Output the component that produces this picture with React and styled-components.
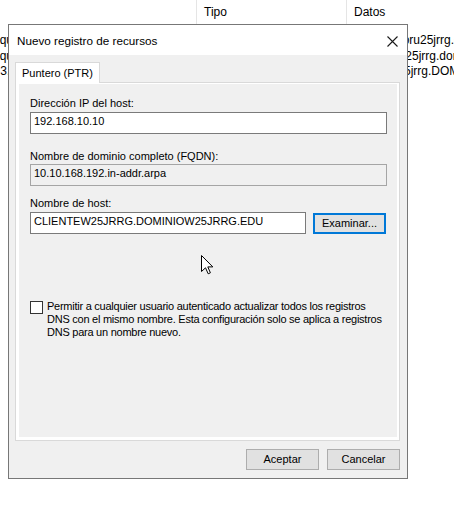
import React from "react";
import styled, { createGlobalStyle } from "styled-components";

const GlobalStyle = createGlobalStyle`
  html, body {
    margin: 0;
    padding: 0;
    background: #ffffff;
    overflow: hidden;
  }
  body {
    font-family: "Liberation Sans", Arial, sans-serif;
    color: #000000;
  }
`;

const records = [
  { name: "(igual que la carpeta principal)", type: "Host (A)", data: "ns-servidoru25jrrg.dominiou25jrrg.edu." },
  { name: "(igual que la carpeta principal)", type: "Servidor de nombres (NS)", data: "servidorw25jrrg.dominiow25jrrg.edu." },
  { name: "10.10.3.1", type: "Puntero (PTR)", data: "clientew25jrrg.DOMINIOW25JRRG.EDU." },
];

const App = () => {
  return (
    <Screen>
      <GlobalStyle />
      <ListView>
        <HeaderRow>
          <HeaderCell />
          <HeaderCell $divider>Tipo</HeaderCell>
          <HeaderCell $divider>Datos</HeaderCell>
        </HeaderRow>
        <RecordList>
          {records.map((r, i) => (
            <RecordRow key={i}>
              <NameCell>
                <span>{r.name}</span>
              </NameCell>
              <Cell>{r.type}</Cell>
              <Cell>{r.data}</Cell>
            </RecordRow>
          ))}
        </RecordList>
      </ListView>

      <Dialog>
        <TitleBar>
          <Title>Nuevo registro de recursos</Title>
          <CloseButton>
            <svg width="11" height="11" viewBox="0 0 11 11">
              <path d="M0.5 0.5 L10.5 10.5 M10.5 0.5 L0.5 10.5" stroke="#1a1a1a" strokeWidth="1.1" fill="none" />
            </svg>
          </CloseButton>
        </TitleBar>

        <Body>
          <TabStrip>
            <Tab>Puntero (PTR)</Tab>
          </TabStrip>
          <TabPanel>
            <PanelContent>
              <Label>Dirección IP del host:</Label>
              <TextBox $top={2} $width={357}>192.168.10.10</TextBox>

              <Label $top={16}>Nombre de dominio completo (FQDN):</Label>
              <TextBox $top={1} $width={357} $readOnly>10.10.168.192.in-addr.arpa</TextBox>

              <Label $top={11}>Nombre de host:</Label>
              <HostRow>
                <TextBox $width={276}>CLIENTEW25JRRG.DOMINIOW25JRRG.EDU</TextBox>
                <Button $focused $width={73}>Examinar...</Button>
              </HostRow>

              <CheckRow>
                <CheckBox />
                <CheckText>
                  Permitir a cualquier usuario autenticado actualizar todos los registros
                  <br />
                  DNS con el mismo nombre. Esta configuración solo se aplica a registros
                  <br />
                  DNS para un nombre nuevo.
                </CheckText>
              </CheckRow>
            </PanelContent>
          </TabPanel>

          <ButtonBar>
            <Button $width={73}>Aceptar</Button>
            <Button $width={73}>Cancelar</Button>
          </ButtonBar>
        </Body>
      </Dialog>

      <Pointer width="13" height="20" viewBox="0 0 13 20">
        <path
          d="M0.5 0.5 L0.5 16.5 L4.5 12.8 L7.2 18.8 L9.4 17.8 L6.8 11.9 L11.8 11.9 Z"
          fill="#ffffff"
          stroke="#000000"
          strokeWidth="1"
          strokeLinejoin="miter"
        />
      </Pointer>
    </Screen>
  );
};

export default App;

const Screen = styled.div`
  position: relative;
  width: 454px;
  height: 531px;
  overflow: hidden;
  background: #ffffff;
`;

/* list view behind the dialog */
const ListView = styled.div`
  display: flex;
  flex-direction: column;
  font-size: 12px;
`;

const HeaderRow = styled.div`
  display: grid;
  grid-template-columns: 196px 150px 1fr;
  height: 24px;
  line-height: 24px;
`;

const HeaderCell = styled.div`
  padding-left: 7px;
  white-space: nowrap;
  border-left: ${(p) => (p.$divider ? "1px solid #e5e5e5" : "none")};
`;

const RecordList = styled.div`
  display: flex;
  flex-direction: column;
  padding-top: 9px;
`;

const RecordRow = styled.div`
  display: grid;
  grid-template-columns: 196px 150px 1fr;
  line-height: 15.5px;
`;

const Cell = styled.div`
  padding-left: 8px;
  white-space: nowrap;
  overflow: hidden;
`;

const NameCell = styled.div`
  white-space: nowrap;
  overflow: hidden;
  span {
    margin-left: -33px;
  }
`;

/* dialog window */
const Dialog = styled.div`
  position: absolute;
  left: 8px;
  top: 24px;
  width: 400px;
  height: 455px;
  box-sizing: border-box;
  border: 1px solid #777777;
  background: #f0f0f0;
  display: flex;
  flex-direction: column;
  font-size: 11px;
`;

const TitleBar = styled.div`
  height: 30px;
  flex-shrink: 0;
  background: #ffffff;
  display: flex;
  align-items: center;
  justify-content: space-between;
  padding-left: 8px;
`;

const Title = styled.div`
  font-size: 11.7px;
  line-height: 14px;
  padding-top: 1px;
`;

const CloseButton = styled.div`
  width: 29px;
  height: 30px;
  display: flex;
  align-items: center;
  justify-content: center;
  padding-top: 2px;
  box-sizing: border-box;
`;

const Body = styled.div`
  flex: 1;
  display: flex;
  flex-direction: column;
  padding: 7px 7px 8px 6px;
`;

const TabStrip = styled.div`
  display: flex;
`;

const Tab = styled.div`
  position: relative;
  z-index: 1;
  height: 20px;
  line-height: 20px;
  padding: 0 6px;
  margin-bottom: -1px;
  border: 1px solid #d9d9d9;
  border-bottom: none;
  background: #ffffff;
  white-space: nowrap;
`;

const TabPanel = styled.div`
  height: 359px;
  box-sizing: border-box;
  border: 1px solid #d9d9d9;
  background: #ffffff;
  padding: 1px 2px 3px 3px;
  display: flex;
`;

const PanelContent = styled.div`
  flex: 1;
  background: #f0f0f0;
  padding: 13px 0 0 11px;
  display: flex;
  flex-direction: column;
  align-items: flex-start;
`;

const Label = styled.div`
  line-height: 13px;
  height: 13px;
  margin-top: ${(p) => p.$top || 0}px;
  white-space: nowrap;
`;

const TextBox = styled.div`
  width: ${(p) => p.$width}px;
  height: 22px;
  box-sizing: border-box;
  margin-top: ${(p) => p.$top || 0}px;
  border: 1px solid ${(p) => (p.$readOnly ? "#a5a5a5" : "#7a7a7a")};
  background: ${(p) => (p.$readOnly ? "#f0f0f0" : "#ffffff")};
  padding: 2px 3px 0;
  line-height: 13px;
  white-space: nowrap;
  overflow: hidden;
`;

const HostRow = styled.div`
  display: flex;
  align-items: flex-start;
  gap: 7px;
  margin-top: 2px;
  & > div:last-child {
    margin-top: 1px;
  }
`;

const Button = styled.div`
  width: ${(p) => p.$width}px;
  height: 21px;
  box-sizing: border-box;
  background: #e1e1e1;
  border: ${(p) => (p.$focused ? "2px solid #0078d7" : "1px solid #adadad")};
  display: flex;
  align-items: center;
  justify-content: center;
  white-space: nowrap;
  line-height: 13px;
`;

const CheckRow = styled.div`
  display: flex;
  align-items: flex-start;
  gap: 4px;
  margin-top: 66px;
`;

const CheckBox = styled.div`
  width: 13px;
  height: 13px;
  box-sizing: border-box;
  border: 1px solid #333333;
  background: #ffffff;
  margin-top: 1px;
`;

const CheckText = styled.div`
  line-height: 12.8px;
  letter-spacing: -0.25px;
  white-space: nowrap;
`;

const ButtonBar = styled.div`
  display: flex;
  justify-content: flex-end;
  gap: 8px;
  margin-top: 8px;
`;

const Pointer = styled.svg`
  position: absolute;
  left: 201px;
  top: 255px;
`;
